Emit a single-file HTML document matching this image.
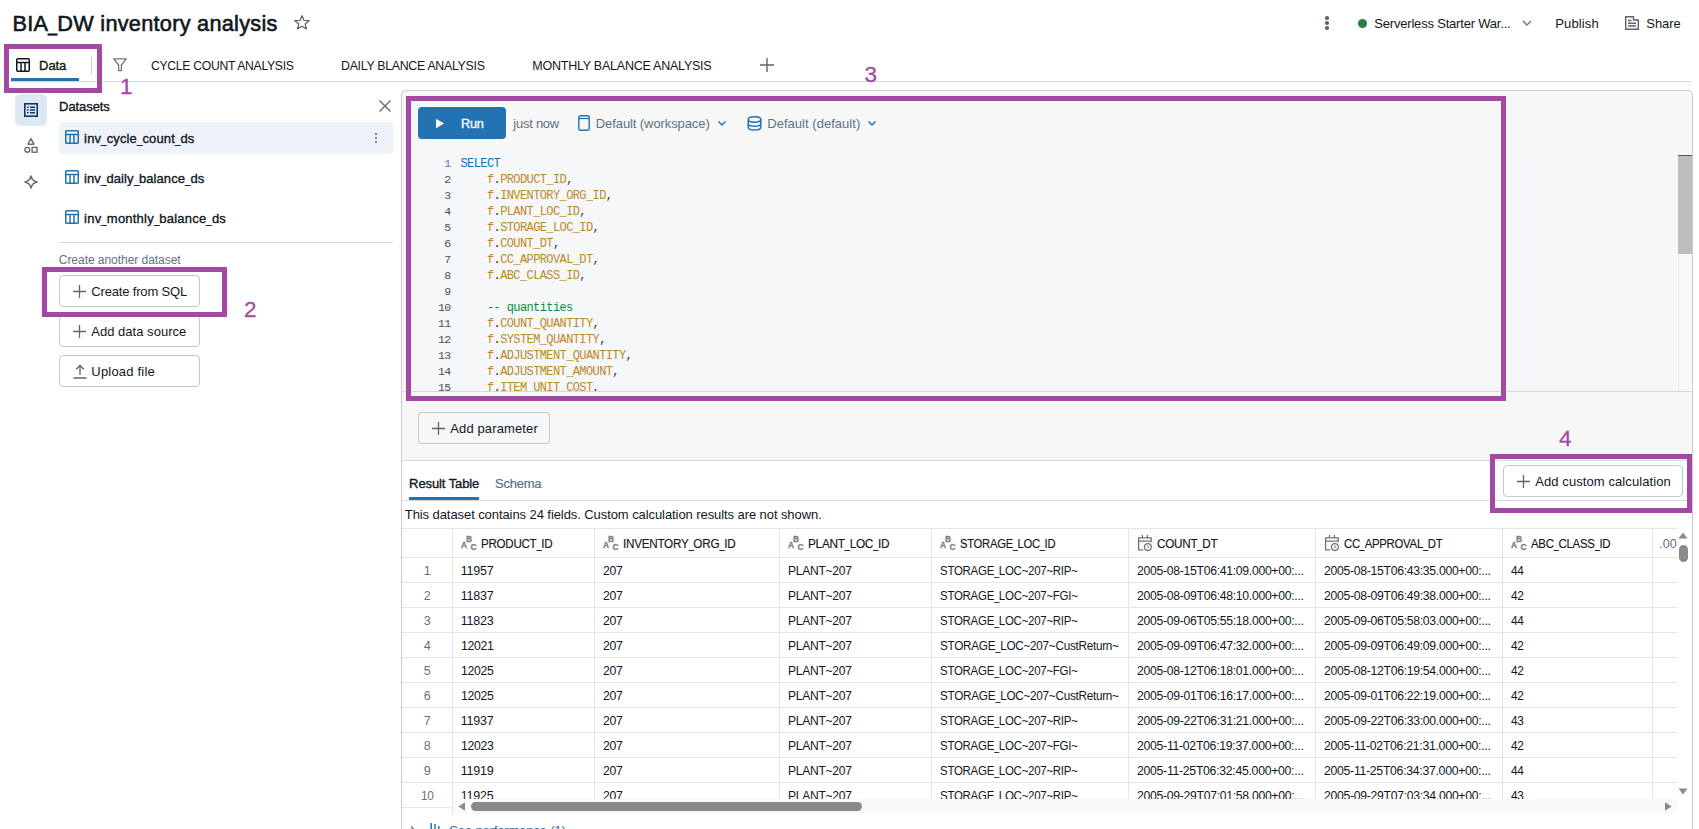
<!DOCTYPE html>
<html><head><meta charset="utf-8"><title>BIA_DW inventory analysis</title>
<style>
html,body{margin:0;padding:0;background:#fff;}
body{width:1699px;height:829px;overflow:hidden;position:relative;font-family:"Liberation Sans",sans-serif;}
#root{position:absolute;left:0;top:0;width:1699px;height:829px;overflow:hidden;background:#fff;}
.t{position:absolute;white-space:pre;font-family:"Liberation Sans",sans-serif;}
.m{position:absolute;white-space:pre;font-family:"Liberation Mono",monospace;}
.b{position:absolute;box-sizing:border-box;}
</style></head><body><div id="root">
<span class="t" style="left:12.4px;top:10.0px;font-size:21.7px;line-height:28px;color:#11171c;font-weight:400;letter-spacing:0.278px;-webkit-text-stroke:0.60px #11171c;">BIA<span style="display:inline-block;width:0.420em;transform-origin:0 50%;transform:scaleX(0.755);letter-spacing:0">_</span>DW inventory analysis</span>
<svg class="b" style="left:292px;top:13px;" width="20" height="20" viewBox="0 0 20 20"><path d="M10 2.7 L12 7.4 L17.2 7.7 L13.1 10.9 L14.5 15.9 L10 13.2 L5.4 15.9 L6.9 10.9 L2.8 7.7 L8 7.4 Z" fill="none" stroke="#5e6266" stroke-width="1.25" stroke-linejoin="round"/></svg>
<div class="b" style="left:1325px;top:16.3px;width:3.5px;height:3.5px;background:#5e6469;border-radius:50%;"></div>
<div class="b" style="left:1325px;top:21.3px;width:3.5px;height:3.5px;background:#5e6469;border-radius:50%;"></div>
<div class="b" style="left:1325px;top:26.3px;width:3.5px;height:3.5px;background:#5e6469;border-radius:50%;"></div>
<div class="b" style="left:1358px;top:19px;width:9px;height:9px;background:#277c43;border-radius:50%;"></div>
<span class="t" style="left:1374.3px;top:14.0px;font-size:13px;line-height:20px;color:#11171c;font-weight:400;letter-spacing:-0.195px;">Serverless Starter War...</span>
<svg class="b" style="left:1521px;top:19px;" width="12" height="8" viewBox="0 0 12 8"><path d="M2 2 L6 6 L10 2" fill="none" stroke="#5f7281" stroke-width="1.3"/></svg>
<span class="t" style="left:1555.3px;top:14.0px;font-size:13px;line-height:20px;color:#11171c;font-weight:400;letter-spacing:0.132px;">Publish</span>
<svg class="b" style="left:1624px;top:15px;" width="16" height="16" viewBox="0 0 16 16"><path d="M1.7 1.7 H9.5 V5 H14.3 V14.3 H1.7 Z M4 5.5 H7.5 M4 8.2 H12 M4 11 H12" fill="none" stroke="#5e6469" stroke-width="1.4"/></svg>
<span class="t" style="left:1646.3px;top:14.0px;font-size:13px;line-height:20px;color:#11171c;font-weight:400;letter-spacing:-0.065px;">Share</span>
<div class="b" style="left:11px;top:81px;width:1681px;height:1px;background:#d5d9dd;"></div>
<svg class="b" style="left:16px;top:58px;" width="14" height="14" viewBox="0 0 14 14"><rect x="0.75" y="0.75" width="12.5" height="12.5" rx="1" fill="none" stroke="#11171c" stroke-width="1.5"/><path d="M0.75 4.6 H13.25 M5 4.6 V13.25 M9 4.6 V13.25" stroke="#11171c" stroke-width="1.5" fill="none"/></svg>
<span class="t" style="left:39.1px;top:56.0px;font-size:13px;line-height:20px;color:#11171c;font-weight:400;letter-spacing:-0.077px;-webkit-text-stroke:0.35px #11171c;">Data</span>
<div class="b" style="left:11px;top:78px;width:68px;height:3px;background:#2272b4;"></div>
<div class="b" style="left:91px;top:57px;width:1px;height:17px;background:#c9ced4;"></div>
<svg class="b" style="left:113px;top:58px;" width="14" height="14" viewBox="0 0 14 14"><path d="M0.8 0.8 H13.2 L8.4 7 V12.6 H5.6 V7 Z" fill="none" stroke="#6a7580" stroke-width="1.3" stroke-linejoin="round"/></svg>
<span class="t" style="left:150.8px;top:56.0px;font-size:12.5px;line-height:20px;color:#11171c;font-weight:400;letter-spacing:-0.300px;display:inline-block;transform-origin:0 50%;transform:scaleX(0.9742);">CYCLE COUNT ANALYSIS</span>
<span class="t" style="left:340.8px;top:56.0px;font-size:12.5px;line-height:20px;color:#11171c;font-weight:400;letter-spacing:-0.300px;display:inline-block;transform-origin:0 50%;transform:scaleX(0.9891);">DAILY BLANCE ANALYSIS</span>
<span class="t" style="left:532.3px;top:56.0px;font-size:12.5px;line-height:20px;color:#11171c;font-weight:400;letter-spacing:-0.235px;">MONTHLY BALANCE ANALYSIS</span>
<svg class="b" style="left:759px;top:57px;" width="16" height="16" viewBox="0 0 16 16"><path d="M8 1 V15 M1 8 H15" stroke="#5e6469" stroke-width="1.4"/></svg>
<div class="b" style="left:15px;top:94px;width:32px;height:32px;background:#dde8f2;border-radius:5px;"></div>
<svg class="b" style="left:24px;top:103px;" width="14" height="14" viewBox="0 0 14 14"><rect x="0.8" y="0.8" width="12.4" height="12.4" fill="none" stroke="#0e3b65" stroke-width="1.6"/><path d="M3 4.2 H4.6 M3 7 H4.6 M3 9.8 H4.6 M6 4.2 H11 M6 7 H11 M6 9.8 H11" stroke="#0e3b65" stroke-width="1.5"/></svg>
<svg class="b" style="left:23px;top:137px;" width="16" height="17" viewBox="0 0 16 17"><path d="M8 1.6 L11 7.2 H5 Z" fill="none" stroke="#686c70" stroke-width="1.4" stroke-linejoin="round"/><circle cx="4.3" cy="12.8" r="2.4" fill="none" stroke="#686c70" stroke-width="1.4"/><rect x="9.1" y="10.4" width="4.9" height="4.8" fill="none" stroke="#686c70" stroke-width="1.4"/></svg>
<svg class="b" style="left:23px;top:174px;" width="16" height="16" viewBox="0 0 16 16"><path d="M8 1.9 C8.7 5.4 10.4 7.3 14.1 8 C10.4 8.7 8.7 10.6 8 14.1 C7.3 10.6 5.6 8.7 1.9 8 C5.6 7.3 7.3 5.4 8 1.9 Z" fill="none" stroke="#686c70" stroke-width="1.5" stroke-linejoin="round"/></svg>
<span class="t" style="left:59.1px;top:97.0px;font-size:13px;line-height:20px;color:#11171c;font-weight:400;letter-spacing:-0.082px;-webkit-text-stroke:0.35px #11171c;">Datasets</span>
<svg class="b" style="left:378px;top:99px;" width="14" height="14" viewBox="0 0 14 14"><path d="M1.5 1.5 L12.5 12.5 M12.5 1.5 L1.5 12.5" stroke="#5e6469" stroke-width="1.3"/></svg>
<div class="b" style="left:59px;top:122px;width:334px;height:32px;background:#eef3f9;border-radius:4px;"></div>
<svg class="b" style="left:64.5px;top:130px;" width="14" height="14" viewBox="0 0 14 14"><rect x="0.75" y="0.75" width="12.5" height="12.5" rx="0.8" fill="none" stroke="#2272b4" stroke-width="1.5"/><path d="M0.75 4.6 H13.25 M5 4.6 V13.25 M9 4.6 V13.25" stroke="#2272b4" stroke-width="1.5" fill="none"/></svg>
<span class="t" style="left:84.1px;top:129.0px;font-size:13px;line-height:20px;color:#11171c;font-weight:400;letter-spacing:0.149px;-webkit-text-stroke:0.35px #11171c;">inv<span style="display:inline-block;width:0.420em;transform-origin:0 50%;transform:scaleX(0.755);letter-spacing:0">_</span>cycle<span style="display:inline-block;width:0.420em;transform-origin:0 50%;transform:scaleX(0.755);letter-spacing:0">_</span>count<span style="display:inline-block;width:0.420em;transform-origin:0 50%;transform:scaleX(0.755);letter-spacing:0">_</span>ds</span>
<div class="b" style="left:375px;top:133px;width:2px;height:2px;background:#5e6469;border-radius:50%;"></div>
<div class="b" style="left:375px;top:137px;width:2px;height:2px;background:#5e6469;border-radius:50%;"></div>
<div class="b" style="left:375px;top:141px;width:2px;height:2px;background:#5e6469;border-radius:50%;"></div>
<svg class="b" style="left:64.5px;top:170px;" width="14" height="14" viewBox="0 0 14 14"><rect x="0.75" y="0.75" width="12.5" height="12.5" rx="0.8" fill="none" stroke="#2272b4" stroke-width="1.5"/><path d="M0.75 4.6 H13.25 M5 4.6 V13.25 M9 4.6 V13.25" stroke="#2272b4" stroke-width="1.5" fill="none"/></svg>
<span class="t" style="left:84.1px;top:169.0px;font-size:13px;line-height:20px;color:#11171c;font-weight:400;letter-spacing:0.077px;-webkit-text-stroke:0.35px #11171c;">inv<span style="display:inline-block;width:0.420em;transform-origin:0 50%;transform:scaleX(0.755);letter-spacing:0">_</span>daily<span style="display:inline-block;width:0.420em;transform-origin:0 50%;transform:scaleX(0.755);letter-spacing:0">_</span>balance<span style="display:inline-block;width:0.420em;transform-origin:0 50%;transform:scaleX(0.755);letter-spacing:0">_</span>ds</span>
<svg class="b" style="left:64.5px;top:210px;" width="14" height="14" viewBox="0 0 14 14"><rect x="0.75" y="0.75" width="12.5" height="12.5" rx="0.8" fill="none" stroke="#2272b4" stroke-width="1.5"/><path d="M0.75 4.6 H13.25 M5 4.6 V13.25 M9 4.6 V13.25" stroke="#2272b4" stroke-width="1.5" fill="none"/></svg>
<span class="t" style="left:84.1px;top:209.0px;font-size:13px;line-height:20px;color:#11171c;font-weight:400;letter-spacing:0.219px;-webkit-text-stroke:0.35px #11171c;">inv<span style="display:inline-block;width:0.420em;transform-origin:0 50%;transform:scaleX(0.755);letter-spacing:0">_</span>monthly<span style="display:inline-block;width:0.420em;transform-origin:0 50%;transform:scaleX(0.755);letter-spacing:0">_</span>balance<span style="display:inline-block;width:0.420em;transform-origin:0 50%;transform:scaleX(0.755);letter-spacing:0">_</span>ds</span>
<div class="b" style="left:59px;top:242px;width:334px;height:1px;background:#d5d9dd;"></div>
<span class="t" style="left:58.8px;top:249.5px;font-size:12px;line-height:20px;color:#5f7281;font-weight:400;letter-spacing:-0.044px;">Create another dataset</span>
<div class="b" style="left:59px;top:275px;width:141px;height:32px;background:#fff;border:1px solid #c6c9cc;border-radius:4px;"></div>
<svg class="b" style="left:73px;top:284.5px;" width="13" height="13" viewBox="-6.5 -6.5 13 13"><path d="M0 -6.5 V6.5 M-6.5 0 H6.5" stroke="#5e6469" stroke-width="1.3"/></svg>
<span class="t" style="left:91.3px;top:282.0px;font-size:13px;line-height:20px;color:#11171c;font-weight:400;letter-spacing:-0.166px;">Create from SQL</span>
<div class="b" style="left:59px;top:315px;width:141px;height:32px;background:#fff;border:1px solid #c6c9cc;border-radius:4px;"></div>
<svg class="b" style="left:73px;top:324.5px;" width="13" height="13" viewBox="-6.5 -6.5 13 13"><path d="M0 -6.5 V6.5 M-6.5 0 H6.5" stroke="#5e6469" stroke-width="1.3"/></svg>
<span class="t" style="left:91.3px;top:322.0px;font-size:13px;line-height:20px;color:#11171c;font-weight:400;letter-spacing:0.018px;">Add data source</span>
<div class="b" style="left:59px;top:355px;width:141px;height:32px;background:#fff;border:1px solid #c6c9cc;border-radius:4px;"></div>
<svg class="b" style="left:73px;top:364px;" width="14" height="15" viewBox="0 0 14 15"><path d="M7 11 V1.5 M3.2 5.3 L7 1.5 L10.8 5.3 M0.5 14 H13.5" fill="none" stroke="#5e6469" stroke-width="1.3"/></svg>
<span class="t" style="left:91.3px;top:362.0px;font-size:13px;line-height:20px;color:#11171c;font-weight:400;letter-spacing:0.200px;">Upload file</span>
<div class="b" style="left:4px;top:44px;width:98px;height:49px;border:5px solid #a349a4;"></div>
<span class="t" style="left:120.1px;top:73.6px;font-size:22.5px;line-height:26px;color:#a349a4;font-weight:400;-webkit-text-stroke:0.30px #a349a4;">1</span>
<div class="b" style="left:42px;top:267px;width:185px;height:50px;border:5px solid #a349a4;"></div>
<span class="t" style="left:244.1px;top:297.1px;font-size:22.5px;line-height:26px;color:#a349a4;font-weight:400;-webkit-text-stroke:0.30px #a349a4;">2</span>
<div class="b" style="left:401px;top:90px;width:1292px;height:810px;background:#f7f7f7;border:1px solid #c9cbcd;border-radius:5px 5px 0 0;"></div>
<div class="b" style="left:418px;top:107px;width:88px;height:32px;background:#2272b4;border-radius:4px;"></div>
<svg class="b" style="left:435px;top:117.8px;" width="10" height="11" viewBox="0 0 10 11"><path d="M1 0.8 L9 5.5 L1 10.2 Z" fill="#fff"/></svg>
<span class="t" style="left:461.1px;top:114.0px;font-size:13px;line-height:20px;color:#fff;font-weight:400;letter-spacing:-0.300px;display:inline-block;transform-origin:0 50%;transform:scaleX(0.9820);-webkit-text-stroke:0.30px #fff;">Run</span>
<span class="t" style="left:513.3px;top:114.0px;font-size:13px;line-height:20px;color:#5f7281;font-weight:400;letter-spacing:-0.251px;">just now</span>
<svg class="b" style="left:578px;top:115px;" width="12" height="16" viewBox="0 0 12 16"><rect x="0.8" y="0.8" width="10.4" height="14.4" rx="1.4" fill="none" stroke="#2272b4" stroke-width="1.4"/><path d="M0.8 3.5 H11.2" stroke="#2272b4" stroke-width="1.3"/></svg>
<span class="t" style="left:595.8px;top:114.0px;font-size:13px;line-height:20px;color:#5f7281;font-weight:400;letter-spacing:-0.093px;">Default (workspace)</span>
<svg class="b" style="left:717px;top:120px;" width="10" height="7" viewBox="0 0 10 7"><path d="M1.5 1.5 L5 5 L8.5 1.5" fill="none" stroke="#2272b4" stroke-width="1.5"/></svg>
<svg class="b" style="left:747.3px;top:115.6px;" width="15" height="15" viewBox="0 0 15 15"><ellipse cx="7.5" cy="3.5" rx="6.3" ry="2.7" fill="none" stroke="#2272b4" stroke-width="1.5"/><path d="M1.2 3.5 V11.3 C1.2 13 4 14.1 7.5 14.1 C11 14.1 13.8 13 13.8 11.3 V3.5 M1.2 7.4 C1.2 9.1 4 10.2 7.5 10.2 C11 10.2 13.8 9.1 13.8 7.4" fill="none" stroke="#2272b4" stroke-width="1.5"/></svg>
<span class="t" style="left:767.3px;top:114.0px;font-size:13px;line-height:20px;color:#5f7281;font-weight:400;letter-spacing:0.027px;">Default (default)</span>
<svg class="b" style="left:867px;top:120px;" width="10" height="7" viewBox="0 0 10 7"><path d="M1.5 1.5 L5 5 L8.5 1.5" fill="none" stroke="#2272b4" stroke-width="1.5"/></svg>
<div class="b" style="left:402px;top:150px;width:1290px;height:241px;background:#f6f7f9;"></div>
<div class="b" style="left:402px;top:150px;width:1276px;height:241px;overflow:hidden;">
<span class="m" style="left:18.5px;top:6.0px;font-size:11.5px;line-height:16px;letter-spacing:-0.6px;color:#8d5bd6;width:30px;text-align:right;">1</span>
<span class="m" style="left:58.5px;top:6.0px;font-size:12px;line-height:16px;letter-spacing:-0.6px;"><span style="color:#0e6fb8">SELECT</span></span>
<span class="m" style="left:18.5px;top:22.0px;font-size:11.5px;line-height:16px;letter-spacing:-0.6px;color:#46525e;width:30px;text-align:right;">2</span>
<span class="m" style="left:58.5px;top:22.0px;font-size:12px;line-height:16px;letter-spacing:-0.6px;"><span style="color:#000">    </span><span style="color:#bd881f">f</span><span style="color:#2b3640">.</span><span style="color:#bd881f">PRODUCT_ID</span><span style="color:#2b3640">,</span></span>
<span class="m" style="left:18.5px;top:38.0px;font-size:11.5px;line-height:16px;letter-spacing:-0.6px;color:#46525e;width:30px;text-align:right;">3</span>
<span class="m" style="left:58.5px;top:38.0px;font-size:12px;line-height:16px;letter-spacing:-0.6px;"><span style="color:#000">    </span><span style="color:#bd881f">f</span><span style="color:#2b3640">.</span><span style="color:#bd881f">INVENTORY_ORG_ID</span><span style="color:#2b3640">,</span></span>
<span class="m" style="left:18.5px;top:54.0px;font-size:11.5px;line-height:16px;letter-spacing:-0.6px;color:#46525e;width:30px;text-align:right;">4</span>
<span class="m" style="left:58.5px;top:54.0px;font-size:12px;line-height:16px;letter-spacing:-0.6px;"><span style="color:#000">    </span><span style="color:#bd881f">f</span><span style="color:#2b3640">.</span><span style="color:#bd881f">PLANT_LOC_ID</span><span style="color:#2b3640">,</span></span>
<span class="m" style="left:18.5px;top:70.0px;font-size:11.5px;line-height:16px;letter-spacing:-0.6px;color:#46525e;width:30px;text-align:right;">5</span>
<span class="m" style="left:58.5px;top:70.0px;font-size:12px;line-height:16px;letter-spacing:-0.6px;"><span style="color:#000">    </span><span style="color:#bd881f">f</span><span style="color:#2b3640">.</span><span style="color:#bd881f">STORAGE_LOC_ID</span><span style="color:#2b3640">,</span></span>
<span class="m" style="left:18.5px;top:86.0px;font-size:11.5px;line-height:16px;letter-spacing:-0.6px;color:#46525e;width:30px;text-align:right;">6</span>
<span class="m" style="left:58.5px;top:86.0px;font-size:12px;line-height:16px;letter-spacing:-0.6px;"><span style="color:#000">    </span><span style="color:#bd881f">f</span><span style="color:#2b3640">.</span><span style="color:#bd881f">COUNT_DT</span><span style="color:#2b3640">,</span></span>
<span class="m" style="left:18.5px;top:102.0px;font-size:11.5px;line-height:16px;letter-spacing:-0.6px;color:#46525e;width:30px;text-align:right;">7</span>
<span class="m" style="left:58.5px;top:102.0px;font-size:12px;line-height:16px;letter-spacing:-0.6px;"><span style="color:#000">    </span><span style="color:#bd881f">f</span><span style="color:#2b3640">.</span><span style="color:#bd881f">CC_APPROVAL_DT</span><span style="color:#2b3640">,</span></span>
<span class="m" style="left:18.5px;top:118.0px;font-size:11.5px;line-height:16px;letter-spacing:-0.6px;color:#46525e;width:30px;text-align:right;">8</span>
<span class="m" style="left:58.5px;top:118.0px;font-size:12px;line-height:16px;letter-spacing:-0.6px;"><span style="color:#000">    </span><span style="color:#bd881f">f</span><span style="color:#2b3640">.</span><span style="color:#bd881f">ABC_CLASS_ID</span><span style="color:#2b3640">,</span></span>
<span class="m" style="left:18.5px;top:134.0px;font-size:11.5px;line-height:16px;letter-spacing:-0.6px;color:#46525e;width:30px;text-align:right;">9</span>
<span class="m" style="left:58.5px;top:134.0px;font-size:12px;line-height:16px;letter-spacing:-0.6px;"></span>
<span class="m" style="left:18.5px;top:150.0px;font-size:11.5px;line-height:16px;letter-spacing:-0.6px;color:#46525e;width:30px;text-align:right;">10</span>
<span class="m" style="left:58.5px;top:150.0px;font-size:12px;line-height:16px;letter-spacing:-0.6px;"><span style="color:#000">    </span><span style="color:#0f8a3c">-- quantities</span></span>
<span class="m" style="left:18.5px;top:166.0px;font-size:11.5px;line-height:16px;letter-spacing:-0.6px;color:#46525e;width:30px;text-align:right;">11</span>
<span class="m" style="left:58.5px;top:166.0px;font-size:12px;line-height:16px;letter-spacing:-0.6px;"><span style="color:#000">    </span><span style="color:#bd881f">f</span><span style="color:#2b3640">.</span><span style="color:#bd881f">COUNT_QUANTITY</span><span style="color:#2b3640">,</span></span>
<span class="m" style="left:18.5px;top:182.0px;font-size:11.5px;line-height:16px;letter-spacing:-0.6px;color:#46525e;width:30px;text-align:right;">12</span>
<span class="m" style="left:58.5px;top:182.0px;font-size:12px;line-height:16px;letter-spacing:-0.6px;"><span style="color:#000">    </span><span style="color:#bd881f">f</span><span style="color:#2b3640">.</span><span style="color:#bd881f">SYSTEM_QUANTITY</span><span style="color:#2b3640">,</span></span>
<span class="m" style="left:18.5px;top:198.0px;font-size:11.5px;line-height:16px;letter-spacing:-0.6px;color:#46525e;width:30px;text-align:right;">13</span>
<span class="m" style="left:58.5px;top:198.0px;font-size:12px;line-height:16px;letter-spacing:-0.6px;"><span style="color:#000">    </span><span style="color:#bd881f">f</span><span style="color:#2b3640">.</span><span style="color:#bd881f">ADJUSTMENT_QUANTITY</span><span style="color:#2b3640">,</span></span>
<span class="m" style="left:18.5px;top:214.0px;font-size:11.5px;line-height:16px;letter-spacing:-0.6px;color:#46525e;width:30px;text-align:right;">14</span>
<span class="m" style="left:58.5px;top:214.0px;font-size:12px;line-height:16px;letter-spacing:-0.6px;"><span style="color:#000">    </span><span style="color:#bd881f">f</span><span style="color:#2b3640">.</span><span style="color:#bd881f">ADJUSTMENT_AMOUNT</span><span style="color:#2b3640">,</span></span>
<span class="m" style="left:18.5px;top:230.0px;font-size:11.5px;line-height:16px;letter-spacing:-0.6px;color:#46525e;width:30px;text-align:right;">15</span>
<span class="m" style="left:58.5px;top:230.0px;font-size:12px;line-height:16px;letter-spacing:-0.6px;"><span style="color:#000">    </span><span style="color:#bd881f">f</span><span style="color:#2b3640">.</span><span style="color:#bd881f">ITEM_UNIT_COST</span><span style="color:#2b3640">,</span></span>
<span class="m" style="left:18.5px;top:246.0px;font-size:11.5px;line-height:16px;letter-spacing:-0.6px;color:#46525e;width:30px;text-align:right;">16</span>
<span class="m" style="left:58.5px;top:246.0px;font-size:12px;line-height:16px;letter-spacing:-0.6px;"><span style="color:#000">    </span><span style="color:#bd881f">f</span><span style="color:#2b3640">.</span><span style="color:#bd881f">ITEM_STD_COST</span><span style="color:#2b3640">,</span></span>
</div>
<div class="b" style="left:1678px;top:155px;width:14px;height:236px;background:#f8f9fb;border-left:1px solid #e8eaec;"></div>
<div class="b" style="left:1678px;top:155px;width:14px;height:99px;background:#bcbdbf;border-top:1px solid #555;"></div>
<div class="b" style="left:402px;top:391px;width:1290px;height:1px;background:#d5d9dd;"></div>
<div class="b" style="left:418px;top:412px;width:132px;height:32px;background:#fff;border:1px solid #c6c9cc;border-radius:4px;"></div>
<div class="b" style="left:418px;top:412px;width:132px;height:32px;background:#f6f7f9;border:1px solid #c6c9cc;border-radius:4px;"></div>
<svg class="b" style="left:431.5px;top:421.5px;" width="13" height="13" viewBox="-6.5 -6.5 13 13"><path d="M0 -6.5 V6.5 M-6.5 0 H6.5" stroke="#5e6469" stroke-width="1.3"/></svg>
<span class="t" style="left:450.3px;top:419.0px;font-size:13px;line-height:20px;color:#11171c;font-weight:400;letter-spacing:0.120px;">Add parameter</span>
<div class="b" style="left:402px;top:460px;width:1290px;height:440px;background:#fff;border-top:1px solid #d5d9dd;"></div>
<span class="t" style="left:409.1px;top:474.0px;font-size:13px;line-height:20px;color:#11171c;font-weight:400;letter-spacing:-0.098px;-webkit-text-stroke:0.35px #11171c;">Result Table</span>
<div class="b" style="left:409px;top:497px;width:70px;height:3px;background:#2272b4;"></div>
<span class="t" style="left:495.0px;top:474.0px;font-size:13px;line-height:20px;color:#5f7281;font-weight:400;letter-spacing:-0.232px;-webkit-text-stroke:0.20px #5f7281;">Schema</span>
<div class="b" style="left:402px;top:500px;width:1290px;height:1px;background:#d5d9dd;"></div>
<div class="b" style="left:1503px;top:465px;width:180px;height:32px;background:#fff;border:1px solid #c6c9cc;border-radius:4px;"></div>
<svg class="b" style="left:1516.5px;top:474.5px;" width="13" height="13" viewBox="-6.5 -6.5 13 13"><path d="M0 -6.5 V6.5 M-6.5 0 H6.5" stroke="#5e6469" stroke-width="1.3"/></svg>
<span class="t" style="left:1535.3px;top:472.0px;font-size:13px;line-height:20px;color:#11171c;font-weight:400;letter-spacing:0.083px;">Add custom calculation</span>
<span class="t" style="left:404.8px;top:505.0px;font-size:13px;line-height:20px;color:#11171c;font-weight:400;letter-spacing:-0.079px;">This dataset contains 24 fields. Custom calculation results are not shown.</span>
<div class="b" style="left:406px;top:96px;width:1100px;height:305px;border:5px solid #a349a4;"></div>
<span class="t" style="left:864.6px;top:62.3px;font-size:22.5px;line-height:26px;color:#a349a4;font-weight:400;-webkit-text-stroke:0.30px #a349a4;">3</span>
<div class="b" style="left:1490px;top:454px;width:202px;height:58.5px;border:5px solid #a349a4;"></div>
<span class="t" style="left:1559.1px;top:426.4px;font-size:22.5px;line-height:26px;color:#a349a4;font-weight:400;-webkit-text-stroke:0.30px #a349a4;">4</span>
<div class="b" style="left:402px;top:528px;width:1275px;height:286px;overflow:hidden;">
<div class="b" style="left:0px;top:0px;width:1275px;height:1px;background:#e3e5e7;"></div>
<div class="b" style="left:0px;top:29px;width:1275px;height:1px;background:#e3e5e7;"></div>
<div class="b" style="left:0px;top:54px;width:1275px;height:1px;background:#e3e5e7;"></div>
<div class="b" style="left:0px;top:79px;width:1275px;height:1px;background:#e3e5e7;"></div>
<div class="b" style="left:0px;top:104px;width:1275px;height:1px;background:#e3e5e7;"></div>
<div class="b" style="left:0px;top:129px;width:1275px;height:1px;background:#e3e5e7;"></div>
<div class="b" style="left:0px;top:154px;width:1275px;height:1px;background:#e3e5e7;"></div>
<div class="b" style="left:0px;top:179px;width:1275px;height:1px;background:#e3e5e7;"></div>
<div class="b" style="left:0px;top:204px;width:1275px;height:1px;background:#e3e5e7;"></div>
<div class="b" style="left:0px;top:229px;width:1275px;height:1px;background:#e3e5e7;"></div>
<div class="b" style="left:0px;top:254px;width:1275px;height:1px;background:#e3e5e7;"></div>
<div class="b" style="left:0px;top:279px;width:1275px;height:1px;background:#e3e5e7;"></div>
<div class="b" style="left:50px;top:0px;width:1px;height:272px;background:#e3e5e7;"></div>
<div class="b" style="left:192px;top:0px;width:1px;height:272px;background:#e3e5e7;"></div>
<div class="b" style="left:377px;top:0px;width:1px;height:272px;background:#e3e5e7;"></div>
<div class="b" style="left:529px;top:0px;width:1px;height:272px;background:#e3e5e7;"></div>
<div class="b" style="left:726px;top:0px;width:1px;height:272px;background:#e3e5e7;"></div>
<div class="b" style="left:913px;top:0px;width:1px;height:272px;background:#e3e5e7;"></div>
<div class="b" style="left:1100px;top:0px;width:1px;height:272px;background:#e3e5e7;"></div>
<div class="b" style="left:1250px;top:0px;width:1px;height:272px;background:#e3e5e7;"></div>
<svg class="b" style="left:58px;top:6px" width="18" height="18" viewBox="0 0 18 18"><g style="font:700 8.3px Liberation Sans,sans-serif" fill="#7d8389" stroke="#7d8389" stroke-width="0.35"><text x="1" y="13.8">A</text><text x="5.9" y="8.1">B</text><text x="10.5" y="15.5">C</text></g></svg>
<span class="t" style="left:79.0px;top:6.0px;font-size:12.5px;line-height:20px;color:#11171c;font-weight:400;letter-spacing:-0.300px;display:inline-block;transform-origin:0 50%;transform:scaleX(0.9277);-webkit-text-stroke:0.15px #11171c;">PRODUCT<span style="display:inline-block;width:0.420em;transform-origin:0 50%;transform:scaleX(0.755);letter-spacing:0">_</span>ID</span>
<svg class="b" style="left:200px;top:6px" width="18" height="18" viewBox="0 0 18 18"><g style="font:700 8.3px Liberation Sans,sans-serif" fill="#7d8389" stroke="#7d8389" stroke-width="0.35"><text x="1" y="13.8">A</text><text x="5.9" y="8.1">B</text><text x="10.5" y="15.5">C</text></g></svg>
<span class="t" style="left:221.0px;top:6.0px;font-size:12.5px;line-height:20px;color:#11171c;font-weight:400;letter-spacing:-0.300px;display:inline-block;transform-origin:0 50%;transform:scaleX(0.9378);-webkit-text-stroke:0.15px #11171c;">INVENTORY<span style="display:inline-block;width:0.420em;transform-origin:0 50%;transform:scaleX(0.755);letter-spacing:0">_</span>ORG<span style="display:inline-block;width:0.420em;transform-origin:0 50%;transform:scaleX(0.755);letter-spacing:0">_</span>ID</span>
<svg class="b" style="left:385px;top:6px" width="18" height="18" viewBox="0 0 18 18"><g style="font:700 8.3px Liberation Sans,sans-serif" fill="#7d8389" stroke="#7d8389" stroke-width="0.35"><text x="1" y="13.8">A</text><text x="5.9" y="8.1">B</text><text x="10.5" y="15.5">C</text></g></svg>
<span class="t" style="left:406.0px;top:6.0px;font-size:12.5px;line-height:20px;color:#11171c;font-weight:400;letter-spacing:-0.300px;display:inline-block;transform-origin:0 50%;transform:scaleX(0.9453);-webkit-text-stroke:0.15px #11171c;">PLANT<span style="display:inline-block;width:0.420em;transform-origin:0 50%;transform:scaleX(0.755);letter-spacing:0">_</span>LOC<span style="display:inline-block;width:0.420em;transform-origin:0 50%;transform:scaleX(0.755);letter-spacing:0">_</span>ID</span>
<svg class="b" style="left:537px;top:6px" width="18" height="18" viewBox="0 0 18 18"><g style="font:700 8.3px Liberation Sans,sans-serif" fill="#7d8389" stroke="#7d8389" stroke-width="0.35"><text x="1" y="13.8">A</text><text x="5.9" y="8.1">B</text><text x="10.5" y="15.5">C</text></g></svg>
<span class="t" style="left:558.0px;top:6.0px;font-size:12.5px;line-height:20px;color:#11171c;font-weight:400;letter-spacing:-0.300px;display:inline-block;transform-origin:0 50%;transform:scaleX(0.8991);-webkit-text-stroke:0.15px #11171c;">STORAGE<span style="display:inline-block;width:0.420em;transform-origin:0 50%;transform:scaleX(0.755);letter-spacing:0">_</span>LOC<span style="display:inline-block;width:0.420em;transform-origin:0 50%;transform:scaleX(0.755);letter-spacing:0">_</span>ID</span>
<svg class="b" style="left:734.5px;top:6px" width="16" height="18" viewBox="0 0 16 18"><path d="M6.2 15.8 H1.6 V3.8 H14.2 V8.2 M1.6 7.2 H14.2 M5.4 1 V3.8 M10.4 1 V3.8" fill="none" stroke="#6e747a" stroke-width="1.3"/><circle cx="10.9" cy="13.1" r="3.4" fill="none" stroke="#6e747a" stroke-width="1.3"/><path d="M10.9 11.3 V13.3 H12.2" fill="none" stroke="#6e747a" stroke-width="1"/></svg>
<span class="t" style="left:755.0px;top:6.0px;font-size:12.5px;line-height:20px;color:#11171c;font-weight:400;letter-spacing:-0.300px;display:inline-block;transform-origin:0 50%;transform:scaleX(0.9384);-webkit-text-stroke:0.15px #11171c;">COUNT<span style="display:inline-block;width:0.420em;transform-origin:0 50%;transform:scaleX(0.755);letter-spacing:0">_</span>DT</span>
<svg class="b" style="left:921.5px;top:6px" width="16" height="18" viewBox="0 0 16 18"><path d="M6.2 15.8 H1.6 V3.8 H14.2 V8.2 M1.6 7.2 H14.2 M5.4 1 V3.8 M10.4 1 V3.8" fill="none" stroke="#6e747a" stroke-width="1.3"/><circle cx="10.9" cy="13.1" r="3.4" fill="none" stroke="#6e747a" stroke-width="1.3"/><path d="M10.9 11.3 V13.3 H12.2" fill="none" stroke="#6e747a" stroke-width="1"/></svg>
<span class="t" style="left:942.0px;top:6.0px;font-size:12.5px;line-height:20px;color:#11171c;font-weight:400;letter-spacing:-0.300px;display:inline-block;transform-origin:0 50%;transform:scaleX(0.9095);-webkit-text-stroke:0.15px #11171c;">CC<span style="display:inline-block;width:0.420em;transform-origin:0 50%;transform:scaleX(0.755);letter-spacing:0">_</span>APPROVAL<span style="display:inline-block;width:0.420em;transform-origin:0 50%;transform:scaleX(0.755);letter-spacing:0">_</span>DT</span>
<svg class="b" style="left:1108px;top:6px" width="18" height="18" viewBox="0 0 18 18"><g style="font:700 8.3px Liberation Sans,sans-serif" fill="#7d8389" stroke="#7d8389" stroke-width="0.35"><text x="1" y="13.8">A</text><text x="5.9" y="8.1">B</text><text x="10.5" y="15.5">C</text></g></svg>
<span class="t" style="left:1129.0px;top:6.0px;font-size:12.5px;line-height:20px;color:#11171c;font-weight:400;letter-spacing:-0.300px;display:inline-block;transform-origin:0 50%;transform:scaleX(0.9147);-webkit-text-stroke:0.15px #11171c;">ABC<span style="display:inline-block;width:0.420em;transform-origin:0 50%;transform:scaleX(0.755);letter-spacing:0">_</span>CLASS<span style="display:inline-block;width:0.420em;transform-origin:0 50%;transform:scaleX(0.755);letter-spacing:0">_</span>ID</span>
<span class="t" style="left:1257.3px;top:6.0px;font-size:12.5px;line-height:20px;color:#5f7281;font-weight:400;letter-spacing:-0.001px;">.00</span>
<span class="t" style="left:21.8px;top:33.0px;font-size:12.5px;line-height:20px;color:#5f7281;font-weight:400;">1</span>
<span class="t" style="left:58.8px;top:33.0px;font-size:12.5px;line-height:20px;color:#11171c;font-weight:400;letter-spacing:-0.239px;">11957</span>
<span class="t" style="left:200.8px;top:33.0px;font-size:12.5px;line-height:20px;color:#11171c;font-weight:400;letter-spacing:-0.300px;display:inline-block;transform-origin:0 50%;transform:scaleX(0.9812);">207</span>
<span class="t" style="left:385.8px;top:33.0px;font-size:12.5px;line-height:20px;color:#11171c;font-weight:400;letter-spacing:-0.300px;display:inline-block;transform-origin:0 50%;transform:scaleX(0.9671);">PLANT~207</span>
<span class="t" style="left:537.8px;top:33.0px;font-size:12.5px;line-height:20px;color:#11171c;font-weight:400;letter-spacing:-0.300px;display:inline-block;transform-origin:0 50%;transform:scaleX(0.9189);">STORAGE<span style="display:inline-block;width:0.420em;transform-origin:0 50%;transform:scaleX(0.755);letter-spacing:0">_</span>LOC~207~RIP~</span>
<span class="t" style="left:734.8px;top:33.0px;font-size:12.5px;line-height:20px;color:#11171c;font-weight:400;letter-spacing:-0.300px;display:inline-block;transform-origin:0 50%;transform:scaleX(0.9761);">2005-08-15T06:41:09.000+00:...</span>
<span class="t" style="left:921.8px;top:33.0px;font-size:12.5px;line-height:20px;color:#11171c;font-weight:400;letter-spacing:-0.300px;display:inline-block;transform-origin:0 50%;transform:scaleX(0.9761);">2005-08-15T06:43:35.000+00:...</span>
<span class="t" style="left:1108.8px;top:33.0px;font-size:12.5px;line-height:20px;color:#11171c;font-weight:400;letter-spacing:-0.300px;display:inline-block;transform-origin:0 50%;transform:scaleX(0.9464);">44</span>
<span class="t" style="left:21.8px;top:58.0px;font-size:12.5px;line-height:20px;color:#5f7281;font-weight:400;">2</span>
<span class="t" style="left:58.8px;top:58.0px;font-size:12.5px;line-height:20px;color:#11171c;font-weight:400;letter-spacing:-0.239px;">11837</span>
<span class="t" style="left:200.8px;top:58.0px;font-size:12.5px;line-height:20px;color:#11171c;font-weight:400;letter-spacing:-0.300px;display:inline-block;transform-origin:0 50%;transform:scaleX(0.9812);">207</span>
<span class="t" style="left:385.8px;top:58.0px;font-size:12.5px;line-height:20px;color:#11171c;font-weight:400;letter-spacing:-0.300px;display:inline-block;transform-origin:0 50%;transform:scaleX(0.9671);">PLANT~207</span>
<span class="t" style="left:537.8px;top:58.0px;font-size:12.5px;line-height:20px;color:#11171c;font-weight:400;letter-spacing:-0.300px;display:inline-block;transform-origin:0 50%;transform:scaleX(0.9190);">STORAGE<span style="display:inline-block;width:0.420em;transform-origin:0 50%;transform:scaleX(0.755);letter-spacing:0">_</span>LOC~207~FGI~</span>
<span class="t" style="left:734.8px;top:58.0px;font-size:12.5px;line-height:20px;color:#11171c;font-weight:400;letter-spacing:-0.300px;display:inline-block;transform-origin:0 50%;transform:scaleX(0.9761);">2005-08-09T06:48:10.000+00:...</span>
<span class="t" style="left:921.8px;top:58.0px;font-size:12.5px;line-height:20px;color:#11171c;font-weight:400;letter-spacing:-0.300px;display:inline-block;transform-origin:0 50%;transform:scaleX(0.9761);">2005-08-09T06:49:38.000+00:...</span>
<span class="t" style="left:1108.8px;top:58.0px;font-size:12.5px;line-height:20px;color:#11171c;font-weight:400;letter-spacing:-0.300px;display:inline-block;transform-origin:0 50%;transform:scaleX(0.9464);">42</span>
<span class="t" style="left:21.8px;top:83.0px;font-size:12.5px;line-height:20px;color:#5f7281;font-weight:400;">3</span>
<span class="t" style="left:58.8px;top:83.0px;font-size:12.5px;line-height:20px;color:#11171c;font-weight:400;letter-spacing:-0.239px;">11823</span>
<span class="t" style="left:200.8px;top:83.0px;font-size:12.5px;line-height:20px;color:#11171c;font-weight:400;letter-spacing:-0.300px;display:inline-block;transform-origin:0 50%;transform:scaleX(0.9812);">207</span>
<span class="t" style="left:385.8px;top:83.0px;font-size:12.5px;line-height:20px;color:#11171c;font-weight:400;letter-spacing:-0.300px;display:inline-block;transform-origin:0 50%;transform:scaleX(0.9671);">PLANT~207</span>
<span class="t" style="left:537.8px;top:83.0px;font-size:12.5px;line-height:20px;color:#11171c;font-weight:400;letter-spacing:-0.300px;display:inline-block;transform-origin:0 50%;transform:scaleX(0.9189);">STORAGE<span style="display:inline-block;width:0.420em;transform-origin:0 50%;transform:scaleX(0.755);letter-spacing:0">_</span>LOC~207~RIP~</span>
<span class="t" style="left:734.8px;top:83.0px;font-size:12.5px;line-height:20px;color:#11171c;font-weight:400;letter-spacing:-0.300px;display:inline-block;transform-origin:0 50%;transform:scaleX(0.9761);">2005-09-06T05:55:18.000+00:...</span>
<span class="t" style="left:921.8px;top:83.0px;font-size:12.5px;line-height:20px;color:#11171c;font-weight:400;letter-spacing:-0.300px;display:inline-block;transform-origin:0 50%;transform:scaleX(0.9761);">2005-09-06T05:58:03.000+00:...</span>
<span class="t" style="left:1108.8px;top:83.0px;font-size:12.5px;line-height:20px;color:#11171c;font-weight:400;letter-spacing:-0.300px;display:inline-block;transform-origin:0 50%;transform:scaleX(0.9464);">44</span>
<span class="t" style="left:21.8px;top:108.0px;font-size:12.5px;line-height:20px;color:#5f7281;font-weight:400;">4</span>
<span class="t" style="left:58.8px;top:108.0px;font-size:12.5px;line-height:20px;color:#11171c;font-weight:400;letter-spacing:-0.300px;display:inline-block;transform-origin:0 50%;transform:scaleX(0.9796);">12021</span>
<span class="t" style="left:200.8px;top:108.0px;font-size:12.5px;line-height:20px;color:#11171c;font-weight:400;letter-spacing:-0.300px;display:inline-block;transform-origin:0 50%;transform:scaleX(0.9812);">207</span>
<span class="t" style="left:385.8px;top:108.0px;font-size:12.5px;line-height:20px;color:#11171c;font-weight:400;letter-spacing:-0.300px;display:inline-block;transform-origin:0 50%;transform:scaleX(0.9671);">PLANT~207</span>
<span class="t" style="left:537.8px;top:108.0px;font-size:12.5px;line-height:20px;color:#11171c;font-weight:400;letter-spacing:-0.300px;display:inline-block;transform-origin:0 50%;transform:scaleX(0.9399);">STORAGE<span style="display:inline-block;width:0.420em;transform-origin:0 50%;transform:scaleX(0.755);letter-spacing:0">_</span>LOC~207~CustReturn~</span>
<span class="t" style="left:734.8px;top:108.0px;font-size:12.5px;line-height:20px;color:#11171c;font-weight:400;letter-spacing:-0.300px;display:inline-block;transform-origin:0 50%;transform:scaleX(0.9761);">2005-09-09T06:47:32.000+00:...</span>
<span class="t" style="left:921.8px;top:108.0px;font-size:12.5px;line-height:20px;color:#11171c;font-weight:400;letter-spacing:-0.300px;display:inline-block;transform-origin:0 50%;transform:scaleX(0.9761);">2005-09-09T06:49:09.000+00:...</span>
<span class="t" style="left:1108.8px;top:108.0px;font-size:12.5px;line-height:20px;color:#11171c;font-weight:400;letter-spacing:-0.300px;display:inline-block;transform-origin:0 50%;transform:scaleX(0.9464);">42</span>
<span class="t" style="left:21.8px;top:133.0px;font-size:12.5px;line-height:20px;color:#5f7281;font-weight:400;">5</span>
<span class="t" style="left:58.8px;top:133.0px;font-size:12.5px;line-height:20px;color:#11171c;font-weight:400;letter-spacing:-0.300px;display:inline-block;transform-origin:0 50%;transform:scaleX(0.9796);">12025</span>
<span class="t" style="left:200.8px;top:133.0px;font-size:12.5px;line-height:20px;color:#11171c;font-weight:400;letter-spacing:-0.300px;display:inline-block;transform-origin:0 50%;transform:scaleX(0.9812);">207</span>
<span class="t" style="left:385.8px;top:133.0px;font-size:12.5px;line-height:20px;color:#11171c;font-weight:400;letter-spacing:-0.300px;display:inline-block;transform-origin:0 50%;transform:scaleX(0.9671);">PLANT~207</span>
<span class="t" style="left:537.8px;top:133.0px;font-size:12.5px;line-height:20px;color:#11171c;font-weight:400;letter-spacing:-0.300px;display:inline-block;transform-origin:0 50%;transform:scaleX(0.9190);">STORAGE<span style="display:inline-block;width:0.420em;transform-origin:0 50%;transform:scaleX(0.755);letter-spacing:0">_</span>LOC~207~FGI~</span>
<span class="t" style="left:734.8px;top:133.0px;font-size:12.5px;line-height:20px;color:#11171c;font-weight:400;letter-spacing:-0.300px;display:inline-block;transform-origin:0 50%;transform:scaleX(0.9761);">2005-08-12T06:18:01.000+00:...</span>
<span class="t" style="left:921.8px;top:133.0px;font-size:12.5px;line-height:20px;color:#11171c;font-weight:400;letter-spacing:-0.300px;display:inline-block;transform-origin:0 50%;transform:scaleX(0.9761);">2005-08-12T06:19:54.000+00:...</span>
<span class="t" style="left:1108.8px;top:133.0px;font-size:12.5px;line-height:20px;color:#11171c;font-weight:400;letter-spacing:-0.300px;display:inline-block;transform-origin:0 50%;transform:scaleX(0.9464);">42</span>
<span class="t" style="left:21.8px;top:158.0px;font-size:12.5px;line-height:20px;color:#5f7281;font-weight:400;">6</span>
<span class="t" style="left:58.8px;top:158.0px;font-size:12.5px;line-height:20px;color:#11171c;font-weight:400;letter-spacing:-0.300px;display:inline-block;transform-origin:0 50%;transform:scaleX(0.9796);">12025</span>
<span class="t" style="left:200.8px;top:158.0px;font-size:12.5px;line-height:20px;color:#11171c;font-weight:400;letter-spacing:-0.300px;display:inline-block;transform-origin:0 50%;transform:scaleX(0.9812);">207</span>
<span class="t" style="left:385.8px;top:158.0px;font-size:12.5px;line-height:20px;color:#11171c;font-weight:400;letter-spacing:-0.300px;display:inline-block;transform-origin:0 50%;transform:scaleX(0.9671);">PLANT~207</span>
<span class="t" style="left:537.8px;top:158.0px;font-size:12.5px;line-height:20px;color:#11171c;font-weight:400;letter-spacing:-0.300px;display:inline-block;transform-origin:0 50%;transform:scaleX(0.9399);">STORAGE<span style="display:inline-block;width:0.420em;transform-origin:0 50%;transform:scaleX(0.755);letter-spacing:0">_</span>LOC~207~CustReturn~</span>
<span class="t" style="left:734.8px;top:158.0px;font-size:12.5px;line-height:20px;color:#11171c;font-weight:400;letter-spacing:-0.300px;display:inline-block;transform-origin:0 50%;transform:scaleX(0.9761);">2005-09-01T06:16:17.000+00:...</span>
<span class="t" style="left:921.8px;top:158.0px;font-size:12.5px;line-height:20px;color:#11171c;font-weight:400;letter-spacing:-0.300px;display:inline-block;transform-origin:0 50%;transform:scaleX(0.9761);">2005-09-01T06:22:19.000+00:...</span>
<span class="t" style="left:1108.8px;top:158.0px;font-size:12.5px;line-height:20px;color:#11171c;font-weight:400;letter-spacing:-0.300px;display:inline-block;transform-origin:0 50%;transform:scaleX(0.9464);">42</span>
<span class="t" style="left:21.8px;top:183.0px;font-size:12.5px;line-height:20px;color:#5f7281;font-weight:400;">7</span>
<span class="t" style="left:58.8px;top:183.0px;font-size:12.5px;line-height:20px;color:#11171c;font-weight:400;letter-spacing:-0.239px;">11937</span>
<span class="t" style="left:200.8px;top:183.0px;font-size:12.5px;line-height:20px;color:#11171c;font-weight:400;letter-spacing:-0.300px;display:inline-block;transform-origin:0 50%;transform:scaleX(0.9812);">207</span>
<span class="t" style="left:385.8px;top:183.0px;font-size:12.5px;line-height:20px;color:#11171c;font-weight:400;letter-spacing:-0.300px;display:inline-block;transform-origin:0 50%;transform:scaleX(0.9671);">PLANT~207</span>
<span class="t" style="left:537.8px;top:183.0px;font-size:12.5px;line-height:20px;color:#11171c;font-weight:400;letter-spacing:-0.300px;display:inline-block;transform-origin:0 50%;transform:scaleX(0.9189);">STORAGE<span style="display:inline-block;width:0.420em;transform-origin:0 50%;transform:scaleX(0.755);letter-spacing:0">_</span>LOC~207~RIP~</span>
<span class="t" style="left:734.8px;top:183.0px;font-size:12.5px;line-height:20px;color:#11171c;font-weight:400;letter-spacing:-0.300px;display:inline-block;transform-origin:0 50%;transform:scaleX(0.9761);">2005-09-22T06:31:21.000+00:...</span>
<span class="t" style="left:921.8px;top:183.0px;font-size:12.5px;line-height:20px;color:#11171c;font-weight:400;letter-spacing:-0.300px;display:inline-block;transform-origin:0 50%;transform:scaleX(0.9761);">2005-09-22T06:33:00.000+00:...</span>
<span class="t" style="left:1108.8px;top:183.0px;font-size:12.5px;line-height:20px;color:#11171c;font-weight:400;letter-spacing:-0.300px;display:inline-block;transform-origin:0 50%;transform:scaleX(0.9464);">43</span>
<span class="t" style="left:21.8px;top:208.0px;font-size:12.5px;line-height:20px;color:#5f7281;font-weight:400;">8</span>
<span class="t" style="left:58.8px;top:208.0px;font-size:12.5px;line-height:20px;color:#11171c;font-weight:400;letter-spacing:-0.300px;display:inline-block;transform-origin:0 50%;transform:scaleX(0.9796);">12023</span>
<span class="t" style="left:200.8px;top:208.0px;font-size:12.5px;line-height:20px;color:#11171c;font-weight:400;letter-spacing:-0.300px;display:inline-block;transform-origin:0 50%;transform:scaleX(0.9812);">207</span>
<span class="t" style="left:385.8px;top:208.0px;font-size:12.5px;line-height:20px;color:#11171c;font-weight:400;letter-spacing:-0.300px;display:inline-block;transform-origin:0 50%;transform:scaleX(0.9671);">PLANT~207</span>
<span class="t" style="left:537.8px;top:208.0px;font-size:12.5px;line-height:20px;color:#11171c;font-weight:400;letter-spacing:-0.300px;display:inline-block;transform-origin:0 50%;transform:scaleX(0.9190);">STORAGE<span style="display:inline-block;width:0.420em;transform-origin:0 50%;transform:scaleX(0.755);letter-spacing:0">_</span>LOC~207~FGI~</span>
<span class="t" style="left:734.8px;top:208.0px;font-size:12.5px;line-height:20px;color:#11171c;font-weight:400;letter-spacing:-0.300px;display:inline-block;transform-origin:0 50%;transform:scaleX(0.9814);">2005-11-02T06:19:37.000+00:...</span>
<span class="t" style="left:921.8px;top:208.0px;font-size:12.5px;line-height:20px;color:#11171c;font-weight:400;letter-spacing:-0.300px;display:inline-block;transform-origin:0 50%;transform:scaleX(0.9814);">2005-11-02T06:21:31.000+00:...</span>
<span class="t" style="left:1108.8px;top:208.0px;font-size:12.5px;line-height:20px;color:#11171c;font-weight:400;letter-spacing:-0.300px;display:inline-block;transform-origin:0 50%;transform:scaleX(0.9464);">42</span>
<span class="t" style="left:21.8px;top:233.0px;font-size:12.5px;line-height:20px;color:#5f7281;font-weight:400;">9</span>
<span class="t" style="left:58.8px;top:233.0px;font-size:12.5px;line-height:20px;color:#11171c;font-weight:400;letter-spacing:-0.239px;">11919</span>
<span class="t" style="left:200.8px;top:233.0px;font-size:12.5px;line-height:20px;color:#11171c;font-weight:400;letter-spacing:-0.300px;display:inline-block;transform-origin:0 50%;transform:scaleX(0.9812);">207</span>
<span class="t" style="left:385.8px;top:233.0px;font-size:12.5px;line-height:20px;color:#11171c;font-weight:400;letter-spacing:-0.300px;display:inline-block;transform-origin:0 50%;transform:scaleX(0.9671);">PLANT~207</span>
<span class="t" style="left:537.8px;top:233.0px;font-size:12.5px;line-height:20px;color:#11171c;font-weight:400;letter-spacing:-0.300px;display:inline-block;transform-origin:0 50%;transform:scaleX(0.9189);">STORAGE<span style="display:inline-block;width:0.420em;transform-origin:0 50%;transform:scaleX(0.755);letter-spacing:0">_</span>LOC~207~RIP~</span>
<span class="t" style="left:734.8px;top:233.0px;font-size:12.5px;line-height:20px;color:#11171c;font-weight:400;letter-spacing:-0.300px;display:inline-block;transform-origin:0 50%;transform:scaleX(0.9814);">2005-11-25T06:32:45.000+00:...</span>
<span class="t" style="left:921.8px;top:233.0px;font-size:12.5px;line-height:20px;color:#11171c;font-weight:400;letter-spacing:-0.300px;display:inline-block;transform-origin:0 50%;transform:scaleX(0.9814);">2005-11-25T06:34:37.000+00:...</span>
<span class="t" style="left:1108.8px;top:233.0px;font-size:12.5px;line-height:20px;color:#11171c;font-weight:400;letter-spacing:-0.300px;display:inline-block;transform-origin:0 50%;transform:scaleX(0.9464);">44</span>
<span class="t" style="left:18.8px;top:258.0px;font-size:12.5px;line-height:20px;color:#5f7281;font-weight:400;letter-spacing:-0.300px;display:inline-block;transform-origin:0 50%;transform:scaleX(0.9464);">10</span>
<span class="t" style="left:58.8px;top:258.0px;font-size:12.5px;line-height:20px;color:#11171c;font-weight:400;letter-spacing:-0.239px;">11925</span>
<span class="t" style="left:200.8px;top:258.0px;font-size:12.5px;line-height:20px;color:#11171c;font-weight:400;letter-spacing:-0.300px;display:inline-block;transform-origin:0 50%;transform:scaleX(0.9812);">207</span>
<span class="t" style="left:385.8px;top:258.0px;font-size:12.5px;line-height:20px;color:#11171c;font-weight:400;letter-spacing:-0.300px;display:inline-block;transform-origin:0 50%;transform:scaleX(0.9671);">PLANT~207</span>
<span class="t" style="left:537.8px;top:258.0px;font-size:12.5px;line-height:20px;color:#11171c;font-weight:400;letter-spacing:-0.300px;display:inline-block;transform-origin:0 50%;transform:scaleX(0.9189);">STORAGE<span style="display:inline-block;width:0.420em;transform-origin:0 50%;transform:scaleX(0.755);letter-spacing:0">_</span>LOC~207~RIP~</span>
<span class="t" style="left:734.8px;top:258.0px;font-size:12.5px;line-height:20px;color:#11171c;font-weight:400;letter-spacing:-0.300px;display:inline-block;transform-origin:0 50%;transform:scaleX(0.9761);">2005-09-29T07:01:58.000+00:...</span>
<span class="t" style="left:921.8px;top:258.0px;font-size:12.5px;line-height:20px;color:#11171c;font-weight:400;letter-spacing:-0.300px;display:inline-block;transform-origin:0 50%;transform:scaleX(0.9761);">2005-09-29T07:03:34.000+00:...</span>
<span class="t" style="left:1108.8px;top:258.0px;font-size:12.5px;line-height:20px;color:#11171c;font-weight:400;letter-spacing:-0.300px;display:inline-block;transform-origin:0 50%;transform:scaleX(0.9464);">43</span>
</div>
<div class="b" style="left:1677px;top:528px;width:15px;height:272px;background:#fff;"></div>
<svg class="b" style="left:1678px;top:532px;" width="10" height="7" viewBox="0 0 10 7"><path d="M5 0.5 L9.5 6.5 H0.5 Z" fill="#8a8a8a"/></svg>
<div class="b" style="left:1679px;top:545px;width:9px;height:17px;background:#8a8a8a;border-radius:4.5px;"></div>
<svg class="b" style="left:1678px;top:788px;" width="10" height="7" viewBox="0 0 10 7"><path d="M5 6.5 L9.5 0.5 H0.5 Z" fill="#8a8a8a"/></svg>
<div class="b" style="left:453px;top:799px;width:1224px;height:15px;background:#fafafa;"></div>
<div class="b" style="left:452px;top:799px;width:1px;height:15px;background:#e3e5e7;"></div>
<div class="b" style="left:402px;top:807px;width:50px;height:1px;background:#e3e5e7;"></div>
<div class="b" style="left:402px;top:808px;width:50px;height:6px;background:#fff;"></div>
<svg class="b" style="left:457.5px;top:802px;" width="7" height="9" viewBox="0 0 7 9"><path d="M0.3 4.5 L7 0.2 V8.8 Z" fill="#8a8a8a"/></svg>
<div class="b" style="left:471px;top:802px;width:391px;height:9px;background:#8a8a8a;border-radius:4.5px;"></div>
<svg class="b" style="left:1664.7px;top:802.3px;" width="7" height="9" viewBox="0 0 7 9"><path d="M6.7 4.5 L0 0.2 V8.8 Z" fill="#8a8a8a"/></svg>
<svg class="b" style="left:410px;top:826px;" width="6" height="9" viewBox="0 0 6 9"><path d="M1 0.8 L5 4.5 L1 8.2" fill="none" stroke="#5e6469" stroke-width="1.3"/></svg>
<svg class="b" style="left:429.5px;top:823px;" width="12" height="10" viewBox="0 0 12 10"><path d="M1.2 0 V10 M5 1 V10 M8.8 3 V10" stroke="#2272b4" stroke-width="1.5"/></svg>
<span class="t" style="left:449.3px;top:820.5px;font-size:13px;line-height:20px;color:#2272b4;font-weight:400;letter-spacing:-0.155px;">See performance (1)</span>
</div></body></html>
